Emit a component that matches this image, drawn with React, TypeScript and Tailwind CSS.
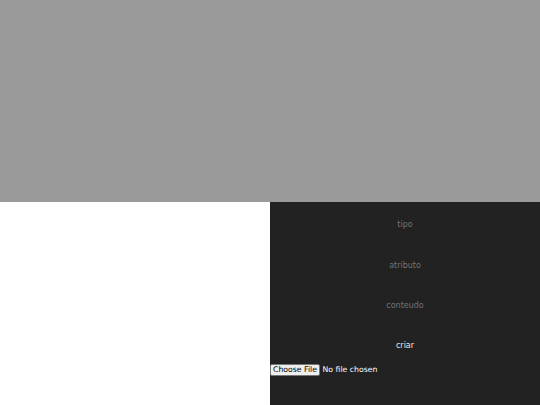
import React from "react";

export default function App() {
  const font = { fontFamily: '"DejaVu Sans", sans-serif' };
  return (
    <div className="w-[540px] h-[405px] flex flex-col overflow-hidden bg-white" style={font}>
      <div className="h-[202px] bg-[#9a9a9a]" />
      <div className="flex flex-1">
        <div className="w-[270px] bg-white" />
        <div className="w-[270px] bg-[#222222] flex flex-col pt-[2.5px]">
          <input
            placeholder="tipo"
            className="h-[40.5px] bg-transparent text-center text-[8px] text-[#ddd] placeholder:text-[#747474] outline-none"
          />
          <input
            placeholder="atributo"
            className="h-[40.5px] bg-transparent text-center text-[8px] text-[#ddd] placeholder:text-[#747474] outline-none"
          />
          <input
            placeholder="conteudo"
            className="h-[40.5px] bg-transparent text-center text-[8px] text-[#ddd] placeholder:text-[#747474] outline-none"
          />
          <button className="h-[40.5px] text-center text-[8px] text-[#e8e8e8]">criar</button>
          <div className="flex items-center h-[12px] -mt-[2.5px] text-[7.75px] text-white">
            <span className="bg-[#efefef] text-black border border-[#767676] rounded-[2px] px-[2px] h-[11.5px] leading-[9.5px]">
              Choose File
            </span>
            <span className="ml-[2.5px]">No file chosen</span>
          </div>
        </div>
      </div>
    </div>
  );
}
